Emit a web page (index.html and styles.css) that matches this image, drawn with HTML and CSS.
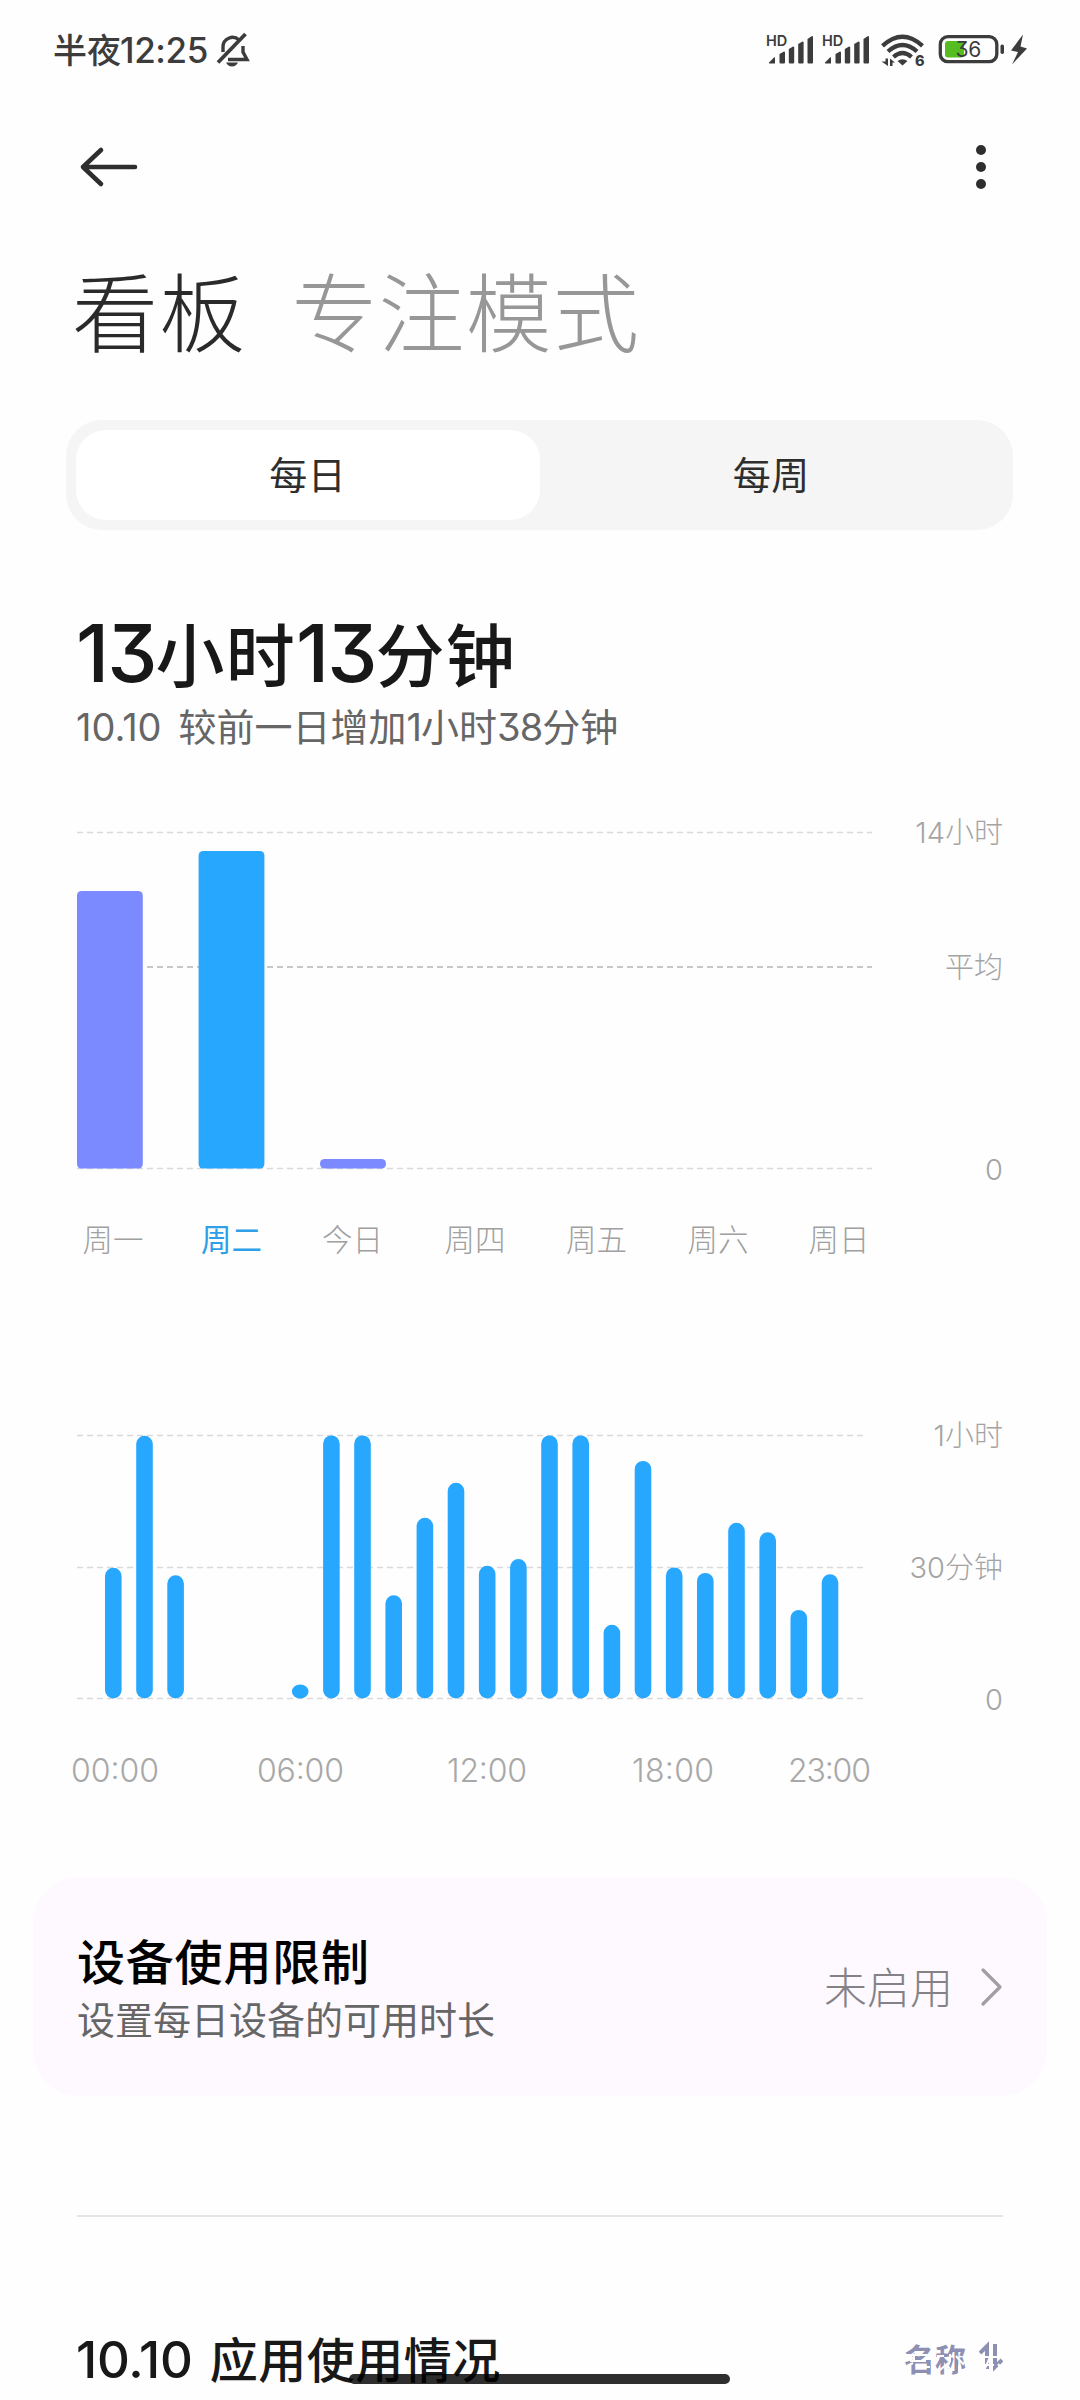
FILE: index.html
```html
<!DOCTYPE html>
<html lang="zh-CN">
<head>
<meta charset="utf-8">
<title>看板</title>
<link rel="stylesheet" href="styles.css">
</head>
<body>
<div class="screen">
  <header class="status">
    <div class="status-left">
      <span class="clock">半夜<span class="clock-digits">12:25</span></span>
      <svg class="bell" width="36" height="38" viewBox="0 0 36 38" fill="none" stroke="#3c3c3c" stroke-width="3.4">
        <path d="M8 21V16A9.500 9.500 0 0 1 24 9"/>
        <path d="M28 15V21L32 28.500H13"/>
        <path d="M30.500 3L3 31.500" stroke-width="3.800"/>
        <path d="M11 31.500h12q-2 4-6 4t-6-4z" fill="#3c3c3c" stroke="none"/>
      </svg>
    </div>
    <svg class="status-icons" width="270" height="40" viewBox="762 30 270 40" fill="#3c3c3c">
      <g id="sim">
        <text x="766" y="46" class="hd">HD</text>
        <path d="M769 62.500L774 57.500Q775 57 775 58V63.500H769.500Q768.500 63.500 769 62.500z"/>
        <path d="M779.500 54L784 51.500Q785 51.500 785 52.500V62.500Q785 63.500 784 63.500H780.500Q779.500 63.500 779.500 62.500z"/>
        <path d="M788.800 49L793 46.500Q794.200 46.500 794.200 47.500V62.500Q794.200 63.500 793 63.500H790Q788.800 63.500 788.800 62.500z"/>
        <path d="M798.200 44L802.500 41.500Q803.600 41.500 803.600 42.500V62.500Q803.600 63.500 802.500 63.500H799.300Q798.200 63.500 798.200 62.500z"/>
        <path d="M807.500 39L812 36Q813 36 813 37V62.500Q813 63.500 812 63.500H808.600Q807.500 63.500 807.500 62.500z"/>
      </g>
      <use href="#sim" x="56"/>
      <g fill="none" stroke="#3c3c3c" stroke-width="4.300">
        <path d="M882.500 45.800Q902.500 27.500 922.500 45.800"/>
        <path d="M888 51.500Q902.500 38.500 917 51.500"/>
        <path d="M893.500 57Q902.500 49 911.500 57"/>
      </g>
      <path d="M897.500 61Q902.500 57.500 907.500 61L902.500 65.500z"/>
      <path d="M885.500 58.500h2.500V66L881.500 61.500h4zM890 66V58.500L895 62.500h-2.500V66z"/>
      <text x="915" y="66" class="wifi-gen">6</text>
      <rect x="940.300" y="36.700" width="56.500" height="25" rx="7.500" fill="none" stroke="#3c3c3c" stroke-width="3.300"/>
      <rect x="945" y="41" width="19" height="16.500" rx="3" fill="#55bd1f"/>
      <rect x="1000.500" y="44.500" width="3.500" height="9.500" rx="1.700"/>
      <text x="955.500" y="57.300" class="battery-level">36</text>
      <path d="M1023 34.500L1011 50.500L1018 52L1012 64.500L1027 48.500L1020.500 46.500z"/>
    </svg>
  </header>

  <nav class="topbar">
    <svg width="60" height="44" viewBox="0 0 60 44" fill="none" stroke="#2e2e2e" stroke-width="4.600" stroke-linecap="round" stroke-linejoin="round">
      <path d="M23 5L5 22L23 39M5 22H57"/>
    </svg>
    <svg width="12" height="46" viewBox="0 0 12 46" fill="#2e2e2e">
      <circle cx="6" cy="6" r="5"/><circle cx="6" cy="23" r="5"/><circle cx="6" cy="40" r="5"/>
    </svg>
  </nav>

  <div class="modes">
    <span class="mode active">看板</span>
    <span class="mode">专注模式</span>
  </div>

  <div class="tabs">
    <div class="tab selected">每日</div>
    <div class="tab">每周</div>
  </div>

  <section class="summary">
    <h1 class="total"><span class="num">13</span>小时<span class="num">13</span>分钟</h1>
    <p class="compare"><span class="num date">10.10</span>较前一日增加<span class="num">1</span>小时<span class="num">38</span>分钟</p>
  </section>

  <svg class="chart week" width="1080" height="480" viewBox="0 800 1080 480">
    <g class="grid">
      <path d="M77 832.500H872"/>
      <path d="M147 967H872" class="average"/>
      <path d="M77 1168.500H872"/>
    </g>
    <g fill="#7b8aff">
      <rect x="77" y="891" width="65.800" height="277.500" rx="4.500"/>
      <rect x="198.600" y="851" width="65.800" height="317.500" rx="4.500" fill="#28a7ff"/>
      <rect x="320" y="1159" width="66" height="9.500" rx="4.500"/>
    </g>
    <g class="scale">
      <text x="1003" y="843">14小时</text>
      <text x="1003" y="977.500">平均</text>
      <text x="1003" y="1179.500">0</text>
    </g>
    <g class="days">
      <text x="113" y="1250.500">周一</text>
      <text x="231.500" y="1250.500" class="today">周二</text>
      <text x="352.500" y="1250.500">今日</text>
      <text x="475" y="1250.500">周四</text>
      <text x="596.500" y="1250.500">周五</text>
      <text x="718" y="1250.500">周六</text>
      <text x="839" y="1250.500">周日</text>
    </g>
  </svg>

  <svg class="chart hours" width="1080" height="400" viewBox="0 1400 1080 400">
    <g class="grid">
      <path d="M77 1435.500H863M77 1567.500H863M77 1698.500H863"/>
    </g>
    <g class="hour-bars">
      <path d="M113.300 1576V1690.200M144.500 1444V1690.200M175.600 1583.500V1690.200"/>
      <path d="M331.400 1443.700V1690.200M362.500 1443.700V1690.200M393.700 1603.500V1690.200M424.900 1526V1690.200M456 1491V1690.200M487.200 1574V1690.200M518.400 1567.300V1690.200"/>
      <path d="M549.500 1443.700V1690.200M580.700 1443.700V1690.200M611.900 1633V1690.200M643 1469.200V1690.200M674.200 1575.700V1690.200M705.300 1581.200V1690.200"/>
      <path d="M736.500 1531V1690.200M767.700 1540.500V1690.200M798.800 1618.200V1690.200M830 1582.500V1690.200"/>
    </g>
    <ellipse cx="300.200" cy="1691.500" rx="8.300" ry="7" fill="#28a7ff"/>
    <g class="scale">
      <text x="1003" y="1446">1小时</text>
      <text x="1003" y="1577.500">30分钟</text>
      <text x="1003" y="1709.500">0</text>
    </g>
    <g class="times">
      <text x="71" y="1782" textLength="88">00:00</text>
      <text x="257" y="1782" textLength="87">06:00</text>
      <text x="447" y="1782" textLength="80">12:00</text>
      <text x="632" y="1782" textLength="82">18:00</text>
      <text x="788" y="1782" textLength="83">23:00</text>
    </g>
  </svg>

  <section class="limit-card">
    <div class="limit-text">
      <div class="limit-title">设备使用限制</div>
      <div class="limit-sub">设置每日设备的可用时长</div>
    </div>
    <div class="limit-state"><span class="limit-value">未启用</span>
      <svg width="24" height="42" viewBox="0 0 24 42" fill="none" stroke="#a09ea2" stroke-width="3.200" stroke-linecap="round" stroke-linejoin="round"><path d="M4 4L21 21L4 38"/></svg>
    </div>
  </section>

  <hr class="divider">

  <div class="usage">
    <h2 class="usage-title"><span class="num">10.10</span>应用使用情况</h2>
    <div class="sort">名称
      <svg width="24" height="32" viewBox="0 0 24 32" fill="none" stroke="#8d90b2" stroke-width="4"><path d="M1 12L8 5V28M16 3V26L23 19"/></svg>
      <svg class="sort-haze" width="110" height="26" viewBox="0 0 110 26" fill="none" stroke="#fefefe" stroke-width="2"><path d="M0 3H28M6 9H22M10 3V9M3 14L9 11M14 15H26M33 4H40M46 2V9L43 16M52 4L59 12L63 7M36 18L43 12L48 21M55 13V22M76 5H98M80 13H90M86 5L79 21M94 12L100 19"/></svg>
    </div>
  </div>
  <div class="home-bar"></div>
</div>
</body>
</html>
```
FILE: styles.css
```css
* { box-sizing: border-box; }

body {
  margin: 0;
  background: #fefefe;
  font-family: "Noto Sans CJK SC", sans-serif;
}

.screen {
  position: relative;
  width: 1080px;
  height: 2400px;
  overflow: hidden;
  display: flex;
  flex-direction: column;
}

.num, .clock-digits {
  font-family: Inter, "Noto Sans CJK SC", sans-serif;
  font-feature-settings: "cv09";
}

/* Status bar */
.status {
  height: 100px;
  padding: 0 48px 0 53px;
  display: flex;
  align-items: center;
  justify-content: space-between;
}
.status-left { display: flex; align-items: center; gap: 7px; }
.clock {
  font-size: 34px;
  font-weight: 500;
  line-height: 48px;
  height: 50px;
  color: #3c3c3c;
}
.clock-digits { font-size: 35px; letter-spacing: -0.400px; margin-left: -1px; }
.hd { font: 600 14.500px Inter, sans-serif; }
.wifi-gen { font: 800 14.500px Inter, sans-serif; }
.battery-level { font: 400 21px Inter, sans-serif; letter-spacing: -0.300px; font-feature-settings: "cv09"; }

/* Top bar */
.topbar {
  height: 134px;
  padding: 0 93px 0 78px;
  display: flex;
  align-items: center;
  justify-content: space-between;
}

.modes {
  height: 156px;
  padding: 0 0 6px 72px;
  display: flex;
  align-items: center;
  gap: 45px;
}
.mode {
  font-size: 86px;
  line-height: 120px;
  font-weight: 300;
  letter-spacing: 1.200px;
  color: #979797;
}
.mode.active { color: #2a2a2a; }

.tabs {
  flex: none;
  margin: 30px 67px 0 66px;
  height: 110px;
  padding: 10px;
  display: flex;
  background: #f5f5f5;
  border-radius: 36px;
}
.tab {
  flex: 1;
  display: flex;
  align-items: center;
  justify-content: center;
  padding-bottom: 4px;
  border-radius: 30px;
  font-size: 38px;
  line-height: 50px;
  letter-spacing: 0.500px;
  color: #2e2e2e;
}
.tab.selected { background: #fff; }

.summary { flex: none; margin: 84px 0 0 76px; height: 144px; }
.total {
  margin: 0;
  height: 80px;
  font-size: 69px;
  line-height: 77px;
  font-weight: 500;
  letter-spacing: 1.200px;
  color: #181818;
}
.total .num { font-size: 80px; letter-spacing: -2px; }
.compare {
  margin: 0;
  height: 64px;
  font-size: 38px;
  line-height: 62px;
  color: #666;
}
.compare .num { font-size: 38px; letter-spacing: -1px; }
.compare .date { margin-right: 17px; letter-spacing: 0; }

/* Charts */
.chart { display: block; flex: none; }
.week { margin-top: 42px; }
.hours { margin-top: 120px; }
.chart text { font-family: Inter, "Noto Sans CJK SC", sans-serif; font-weight: 300; }
.grid path { fill: none; stroke: #d9d9d9; stroke-width: 1.400; stroke-dasharray: 6 4; }
.grid .average { stroke: #c8c8c8; stroke-width: 2; }
.scale text { font-size: 29px; text-anchor: end; fill: #a4a4a4; }
.days text { font-size: 30.500px; text-anchor: middle; fill: #a0a0a0; }
.days .today { fill: #2f9fe8; font-weight: 400; }
.hour-bars path { fill: none; stroke: #28a7ff; stroke-width: 16.600; stroke-linecap: round; }
.times text { font-size: 32px; fill: #a8a8a8; }

/* Usage limit card */
.limit-card {
  flex: none;
  margin: 77px 33px 0;
  height: 219px;
  padding: 0 44px 0 44px;
  border-radius: 46px;
  background: #fdf9ff;
  display: flex;
  align-items: center;
  justify-content: space-between;
}
.limit-title { font-size: 48px; line-height: 62px; font-weight: 500; letter-spacing: 0.800px; color: #000; }
.limit-sub { font-size: 38px; line-height: 56px; color: #666; }
.limit-state {
  display: flex;
  align-items: center;
  gap: 26px;
  font-size: 43px;
  line-height: 60px;
  font-weight: 300;
  color: #848286;
}
.limit-value { padding-bottom: 4px; }

.divider {
  flex: none;
  margin: 119px 77px 0;
  height: 2px;
  border: 0;
  background: #e4e6e5;
}

.usage {
  flex: none;
  margin: 111px 77px 0 76px;
  height: 60px;
  display: flex;
  align-items: center;
  justify-content: space-between;
}
.usage-title { margin: 0; height: 60px; font-size: 48px; line-height: 58px; font-weight: 500; letter-spacing: 0.500px; color: #181818; }
.usage-title .num { font-size: 51px; letter-spacing: -0.200px; margin-right: 17px; }
.sort {
  position: relative;
  display: flex;
  align-items: center;
  gap: 13px;
  padding-bottom: 2px;
  font-size: 31px;
  font-weight: 700;
  color: #8d90b2;
}
.sort-haze { position: absolute; left: 0; top: 17px; }

.home-bar {
  position: absolute;
  left: 349px;
  top: 2374px;
  width: 381px;
  height: 10px;
  border-radius: 5px;
  background: rgba(0, 0, 0, 0.820);
}
```
